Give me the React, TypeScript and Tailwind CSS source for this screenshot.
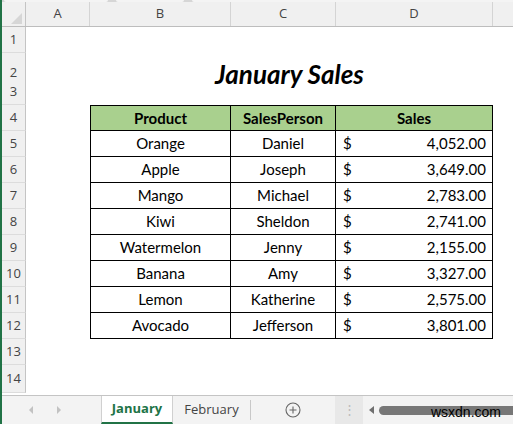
import { Fragment } from "react";

type Sale = { product: string; person: string; amount: string };

const sales: Sale[] = [
  { product: "Orange", person: "Daniel", amount: "4,052.00" },
  { product: "Apple", person: "Joseph", amount: "3,649.00" },
  { product: "Mango", person: "Michael", amount: "2,783.00" },
  { product: "Kiwi", person: "Sheldon", amount: "2,741.00" },
  { product: "Watermelon", person: "Jenny", amount: "2,155.00" },
  { product: "Banana", person: "Amy", amount: "3,327.00" },
  { product: "Lemon", person: "Katherine", amount: "2,575.00" },
  { product: "Avocado", person: "Jefferson", amount: "3,801.00" },
];

const cols = "grid grid-cols-[24px_64px_141px_105px_157px_1fr]";
const ui = "font-['Open_Sans',sans-serif]";
const cell = "font-['Lato',sans-serif] text-[15px] text-black";

function RowHead({ n }: { n: number }) {
  return (
    <div
      className={`${ui} flex items-center justify-center border-r border-b border-r-[#c4c4c4] border-b-[#dcdcdc] bg-[#f0f0f0] text-[13px] text-[#444]`}
    >
      {n}
    </div>
  );
}

function BlankRow({ n, h = "h-[26px]", children }: { n: number; h?: string; children?: React.ReactNode }) {
  return (
    <div className={`${cols} ${h}`}>
      <RowHead n={n} />
      <div />
      {children ?? (
        <>
          <div />
          <div />
          <div />
        </>
      )}
      <div />
    </div>
  );
}

export default function App() {
  return (
    <div className="flex h-[424px] w-[513px] flex-col overflow-hidden border-l-2 border-[#217346] bg-white">
      {/* formula bar remnant */}
      <div className="flex h-[2px] gap-[8px] bg-[#d6d6d6] pl-[2px]">
        <div className="w-[104px] rounded-b bg-[#f4f4f4]" />
        <div className="w-[68px] rounded-b bg-[#f4f4f4]" />
        <div className="flex-1 rounded-bl bg-[#f4f4f4]" />
      </div>

      {/* column headers */}
      <div className={`${cols} ${ui} h-[25px] border-b border-[#bdbdbd] bg-[#f0f0f0] text-[13px] text-[#444]`}>
        <div className="relative border-r border-[#c4c4c4]">
          <div className="absolute bottom-[2px] right-[3px] h-0 w-0 border-b-[11px] border-l-[11px] border-b-[#d6d6d6] border-l-transparent" />
        </div>
        {["A", "B", "C", "D"].map((c) => (
          <div key={c} className="flex items-center justify-center border-r border-[#d4d4d4]">
            {c}
          </div>
        ))}
        <div />
      </div>

      <BlankRow n={1} />
      <BlankRow n={2}>
        <div className="col-span-3 flex items-center justify-center pr-[4px] pt-[2px] font-['Lato',sans-serif] text-[26px] font-bold italic text-black">
          January Sales
        </div>
      </BlankRow>
      <BlankRow n={3} />

      {/* table header */}
      <BlankRow n={4}>
        {["Product", "SalesPerson", "Sales"].map((t, i) => (
          <div
            key={t}
            className={`${cell} flex items-center justify-center border-y border-r border-black bg-[#a9d08e] font-bold ${i === 0 ? "border-l" : ""}`}
          >
            {t}
          </div>
        ))}
      </BlankRow>

      {sales.map((s, i) => (
        <Fragment key={s.product}>
          <BlankRow n={i + 5}>
            <div className={`${cell} flex items-center justify-center border-x border-b border-black`}>{s.product}</div>
            <div className={`${cell} flex items-center justify-center border-r border-b border-black`}>{s.person}</div>
            <div className={`${cell} flex items-center justify-between border-r border-b border-black pl-[7px] pr-[6px]`}>
              <span>$</span>
              <span>{s.amount}</span>
            </div>
          </BlankRow>
        </Fragment>
      ))}

      <BlankRow n={13} />
      <BlankRow n={14} h="h-[28px]" />

      {/* sheet tabs */}
      <div className={`${ui} relative mt-[2px] flex flex-1 items-stretch border-t border-[#c4c4c4] bg-[#f3f3f3] text-[13px]`}>
        <div className="flex w-[99px] items-center gap-[24px] pl-[27px]">
          <span className="h-0 w-0 border-y-[4px] border-r-[4px] border-y-transparent border-r-[#c2c2c2]" />
          <span className="h-0 w-0 border-y-[4px] border-l-[4px] border-y-transparent border-l-[#c2c2c2]" />
        </div>
        <div className="flex w-[72px] items-center justify-center border-x border-b-2 border-x-[#d0d0d0] border-b-[#217346] bg-white font-bold text-[#217346]">
          January
        </div>
        <div className="flex w-[77px] items-center justify-center text-[#444]">February</div>
        <div className="my-[4px] w-px bg-[#c8c8c8]" />
        <div className="flex w-[84px] items-center justify-center">
          <svg width="16" height="16" viewBox="0 0 16 16" fill="none" stroke="#666" strokeWidth="1.1">
            <circle cx="8" cy="8" r="7" />
            <path d="M8 4.5v7M4.5 8h7" />
          </svg>
        </div>
        <div className="flex w-[28px] items-center justify-center bg-[#e8e8e8] text-[#bbb]">⋮</div>
        <div className="flex flex-1 items-center pl-[6px]">
          <span className="h-0 w-0 border-y-[4px] border-r-[5px] border-y-transparent border-r-[#6f6f6f]" />
          <div className="ml-[5px] h-[9px] flex-1 rounded-l-full bg-[#777]" />
        </div>
        <span className="absolute right-[12px] top-[6px] font-['Liberation_Sans',sans-serif] text-[14px] text-black">
          wsxdn.com
        </span>
      </div>
    </div>
  );
}
